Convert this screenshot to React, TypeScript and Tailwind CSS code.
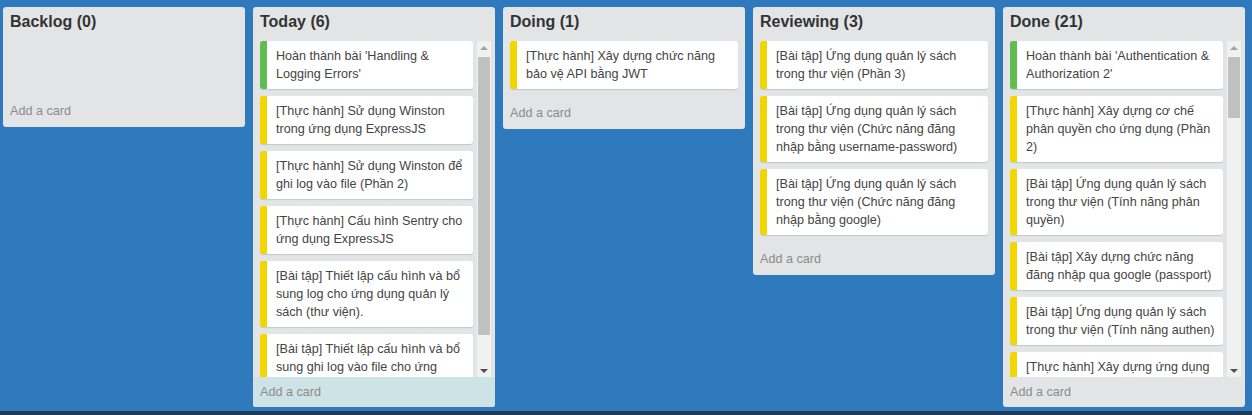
import React from "react";

type Card = { color: "green" | "yellow"; lines: string[] };

type Column = {
  title: string;
  cards: Card[];
  scroll?: { thumb: string };
  hover?: boolean;
};

const G = "green" as const;
const Y = "yellow" as const;

const columns: Column[] = [
  { title: "Backlog (0)", cards: [] },
  {
    title: "Today (6)",
    scroll: { thumb: "mt-[3px] h-[278px]" },
    hover: true,
    cards: [
      { color: G, lines: ["Hoàn thành bài 'Handling &", "Logging Errors'"] },
      { color: Y, lines: ["[Thực hành] Sử dụng Winston", "trong ứng dụng ExpressJS"] },
      { color: Y, lines: ["[Thực hành] Sử dụng Winston để", "ghi log vào file (Phần 2)"] },
      { color: Y, lines: ["[Thực hành] Cấu hình Sentry cho", "ứng dụng ExpressJS"] },
      {
        color: Y,
        lines: ["[Bài tập] Thiết lập cấu hình và bổ", "sung log cho ứng dụng quản lý", "sách (thư viện)."],
      },
      {
        color: Y,
        lines: ["[Bài tập] Thiết lập cấu hình và bổ", "sung ghi log vào file cho ứng"],
      },
    ],
  },
  {
    title: "Doing (1)",
    cards: [{ color: Y, lines: ["[Thực hành] Xây dựng chức năng", "bảo vệ API bằng JWT"] }],
  },
  {
    title: "Reviewing (3)",
    cards: [
      { color: Y, lines: ["[Bài tập] Ứng dụng quản lý sách", "trong thư viện (Phần 3)"] },
      {
        color: Y,
        lines: ["[Bài tập] Ứng dụng quản lý sách", "trong thư viện (Chức năng đăng", "nhập bằng username-password)"],
      },
      {
        color: Y,
        lines: ["[Bài tập] Ứng dụng quản lý sách", "trong thư viện (Chức năng đăng", "nhập bằng google)"],
      },
    ],
  },
  {
    title: "Done (21)",
    scroll: { thumb: "mt-[3px] h-[61px]" },
    cards: [
      { color: G, lines: ["Hoàn thành bài 'Authentication &", "Authorization 2'"] },
      { color: Y, lines: ["[Thực hành] Xây dựng cơ chế", "phân quyền cho ứng dụng (Phần", "2)"] },
      { color: Y, lines: ["[Bài tập] Ứng dụng quản lý sách", "trong thư viện (Tính năng phân", "quyền)"] },
      { color: Y, lines: ["[Bài tập] Xây dựng chức năng", "đăng nhập qua google (passport)"] },
      { color: Y, lines: ["[Bài tập] Ứng dụng quản lý sách", "trong thư viện (Tính năng authen)"] },
      { color: Y, lines: ["[Thực hành] Xây dựng ứng dụng"] },
    ],
  },
];

function CardItem({ card, clipped }: { card: Card; clipped?: boolean }) {
  return (
    <div
      className={
        "shrink-0 rounded-[3px] bg-white shadow-[0_1px_1px_#c3c8cc] border-l-[7px] pl-[9px] pr-2 pt-[6px] text-[12.6px] leading-[18px] text-[#444] whitespace-nowrap " +
        (clipped ? "min-h-[60px] " : "pb-[6px] ") +
        (card.color === "green" ? "border-[#61bd4f]" : "border-[#f2d600]")
      }
    >
      {card.lines.map((l, i) => (
        <div key={i}>{l}</div>
      ))}
    </div>
  );
}

function Scrollbar({ thumb }: { thumb: string }) {
  return (
    <div className="w-[14px] ml-[4px] bg-[#f1f1f1] flex flex-col shrink-0">
      {/* up arrow */}
      <div className="h-[13px] flex items-center justify-center">
        <div className="w-0 h-0 border-x-[4px] border-x-transparent border-b-[4px] border-b-[#a3a3a3]" />
      </div>
      <div className={"mx-[1px] bg-[#c1c1c1] " + thumb} />
      {/* down arrow */}
      <div className="mt-auto h-[13px] flex items-center justify-center">
        <div className="w-0 h-0 border-x-[4px] border-x-transparent border-t-[4px] border-t-[#505050]" />
      </div>
    </div>
  );
}

function ListColumn({ col }: { col: Column }) {
  return (
    <div className="w-[242px] shrink-0 self-start bg-[#e2e4e6] rounded-[3px] flex flex-col">
      <div className="h-[34px] pt-[5px] px-[7px]">
        <h2 className="text-[16px] leading-[20px] font-bold text-[#333]">{col.title}</h2>
      </div>

      {col.scroll ? (
        <div className="flex h-[336px] pl-[7px] pr-[4px]">
          <div className="flex-1 overflow-hidden flex flex-col gap-[7px]">
            {col.cards.map((c, i) => (
              <CardItem key={i} card={c} clipped={i === col.cards.length - 1} />
            ))}
          </div>
          <Scrollbar thumb={col.scroll.thumb} />
        </div>
      ) : (
        <div className="min-h-[54px] px-[7px] pb-[8px] flex flex-col gap-[7px]">
          {col.cards.map((c, i) => (
            <CardItem key={i} card={c} />
          ))}
        </div>
      )}

      <div
        className={
          "flex items-center px-[7px] rounded-b-[3px] text-[12.6px] text-[#8c8c8c] " +
          (col.scroll ? "h-[30px] " : "h-[32px] ") +
          (col.hover ? "bg-[#cde3e6]" : "")
        }
      >
        Add a card
      </div>
    </div>
  );
}

export default function App() {
  return (
    <div className="w-[1252px] h-[415px] flex flex-col bg-[#2f79bd] font-['Liberation_Sans',Arial,sans-serif] overflow-hidden">
      <div className="flex-1 flex gap-[8px] pl-[3px] pt-[7px]">
        {columns.map((col) => (
          <ListColumn key={col.title} col={col} />
        ))}
      </div>
      <div className="h-[4px] bg-[#1f3a57]" />
    </div>
  );
}
